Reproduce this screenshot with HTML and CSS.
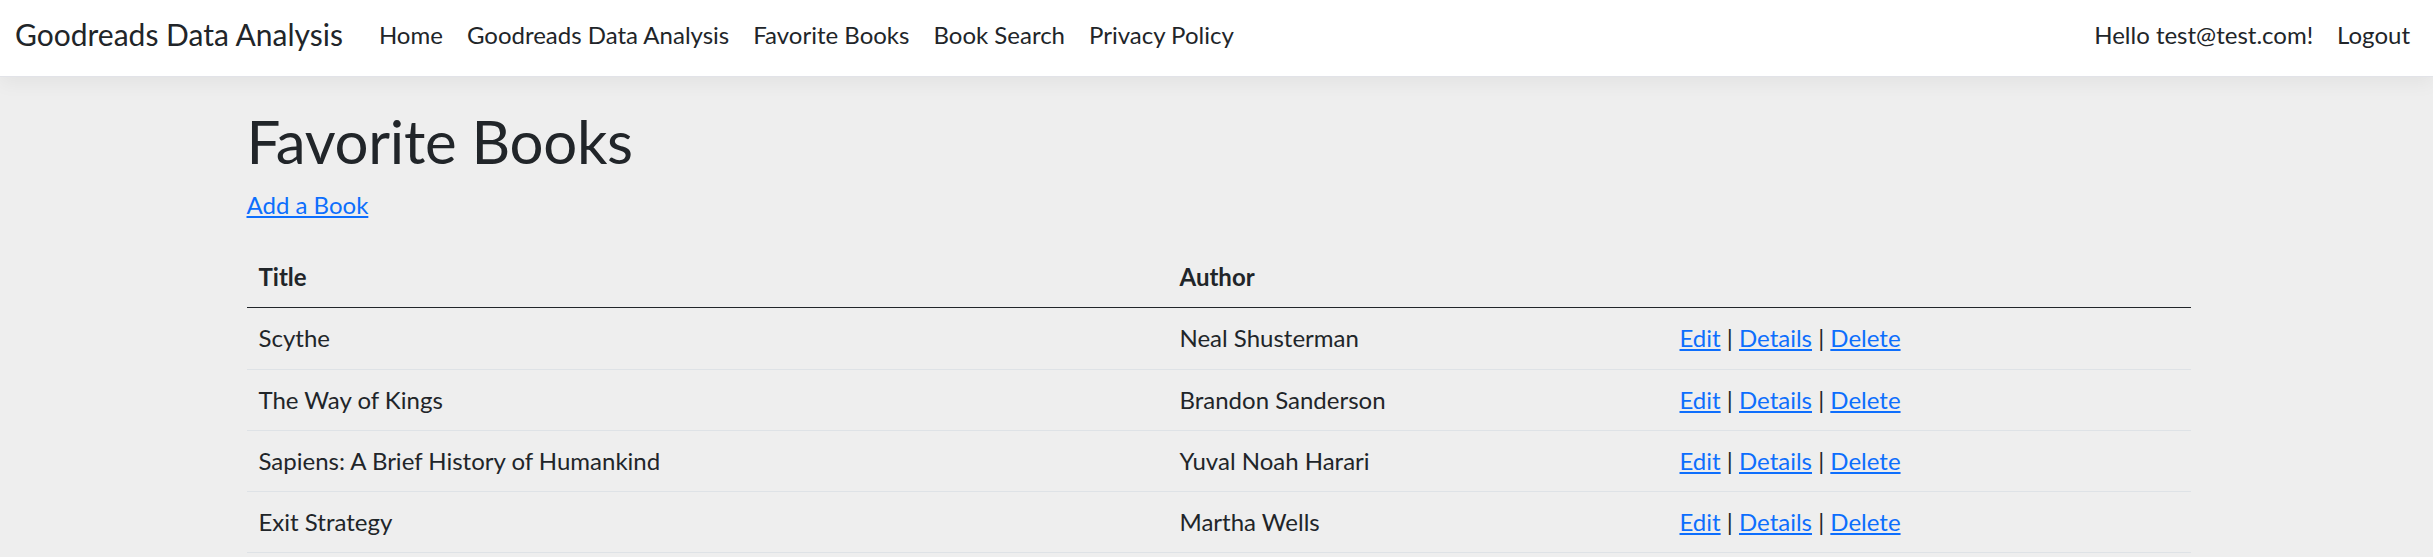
FILE: index.html
```html
<!DOCTYPE html>
<html lang="en">
<head>
<meta charset="utf-8">
<title>Favorite Books - Goodreads Data Analysis</title>
<link rel="stylesheet" href="styles.css">
</head>
<body>
<header class="navbar">
  <a class="brand" href="#">Goodreads Data Analysis</a>
  <nav class="nav-main">
    <a class="nav-link" href="#">Home</a>
    <a class="nav-link" href="#">Goodreads Data Analysis</a>
    <a class="nav-link" href="#">Favorite Books</a>
    <a class="nav-link" href="#">Book Search</a>
    <a class="nav-link" href="#">Privacy Policy</a>
  </nav>
  <nav class="nav-user">
    <a class="nav-link" href="#">Hello test@test.com!</a>
    <a class="nav-link" href="#">Logout</a>
  </nav>
</header>
<main class="container">
  <h1 class="page-title">Favorite Books</h1>
  <p class="add"><a class="link" href="#">Add a Book</a></p>
  <table class="table">
    <colgroup>
      <col class="col-title">
      <col class="col-author">
      <col class="col-actions">
    </colgroup>
    <thead>
      <tr><th>Title</th><th>Author</th><th></th></tr>
    </thead>
    <tbody>
      <tr><td>Scythe</td><td>Neal Shusterman</td><td><a class="link" href="#">Edit</a> | <a class="link" href="#">Details</a> | <a class="link" href="#">Delete</a></td></tr>
      <tr><td>The Way of Kings</td><td>Brandon Sanderson</td><td><a class="link" href="#">Edit</a> | <a class="link" href="#">Details</a> | <a class="link" href="#">Delete</a></td></tr>
      <tr><td>Sapiens: A Brief History of Humankind</td><td>Yuval Noah Harari</td><td><a class="link" href="#">Edit</a> | <a class="link" href="#">Details</a> | <a class="link" href="#">Delete</a></td></tr>
      <tr><td>Exit Strategy</td><td>Martha Wells</td><td><a class="link" href="#">Edit</a> | <a class="link" href="#">Details</a> | <a class="link" href="#">Delete</a></td></tr>
    </tbody>
  </table>
</main>
</body>
</html>
```
FILE: styles.css
```css
* { box-sizing: border-box; }
html, body { margin: 0; }
body {
  background: #eeeeee;
  color: #212529;
  font-family: Lato, "Noto Sans", sans-serif;
  font-size: 24px;
  line-height: 1.5;
  overflow: hidden;
}
.navbar {
  height: 77px;
  background: #ffffff;
  border-bottom: 1px solid #e2e3e8;
  box-shadow: 0 6px 18px rgba(0, 0, 0, 0.05);
  display: flex;
  align-items: center;
  padding: 0 11px 7px 15px;
  position: relative;
}
.brand {
  font-size: 30px;
  line-height: 45px;
  color: #212529;
  text-decoration: none;
  margin-right: 24px;
}
.nav-main, .nav-user { display: flex; align-items: center; }
.nav-main { flex: 1; }
.nav-link {
  padding: 0 12px;
  line-height: 36px;
  color: #212529;
  text-decoration: none;
}
.container {
  width: 1980px;
  margin: 0 auto;
  padding: 28px 16px 0 20px;
}
.page-title {
  margin: 0 0 10px;
  font-size: 60px;
  font-weight: 400;
  line-height: 72px;
  letter-spacing: -0.3px;
}
.add { margin: 0 0 24px; line-height: 36px; }
.link { color: #0d6efd; text-decoration: underline; text-underline-offset: 2px; }
.table {
  width: 1944px;
  table-layout: fixed;
  border-collapse: collapse;
}
.col-title { width: 921px; }
.col-author { width: 500px; }
.col-actions { width: 523px; }
.table th, .table td {
  text-align: left;
  padding: 12px 12px 12.3px;
  line-height: 36px;
  vertical-align: top;
}
.table th {
  font-weight: 700;
  border-bottom: 1px solid #212529;
}
.table td { border-bottom: 1px solid #dee2e6; }
```
